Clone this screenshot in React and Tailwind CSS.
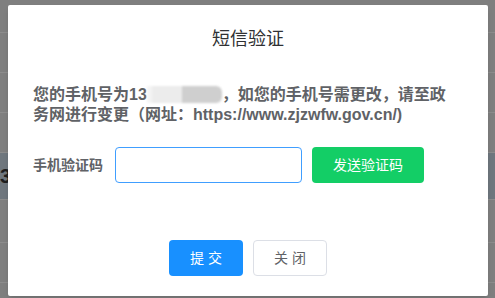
import React, { useState } from "react";

const rows = [
  { h: "h-[33px]", cls: "bg-[#7f7f7f]" },
  { h: "h-[40px]", cls: "bg-[#7f7f7f]" },
  { h: "h-[40px]", cls: "bg-[#7f7f7f]" },
  { h: "h-[40px]", cls: "bg-[#7f7f7f]" },
  { h: "h-[47px]", cls: "bg-[#6f777e]", text: "3" },
  { h: "h-[43px]", cls: "bg-[#7f7f7f]" },
  { h: "h-[40px]", cls: "bg-[#7f7f7f]" },
  { h: "h-[40px]", cls: "bg-[#7f7f7f]" },
];

const SmsDialog = () => {
  const [code, setCode] = useState("");

  return (
    <div className="absolute left-[8px] top-[5px] w-[480px] h-[291px] bg-white rounded-[2px] shadow-md flex flex-col">
      <div className="pt-[22px] text-center text-[18px] leading-[24px] text-[#303133]">
        短信验证
      </div>

      <div className="px-[25px] pt-[34px]">
        <p className="w-[420px] text-[16px] leading-[20px] font-bold text-[#606266]">
          您的手机号为13
          <span className="inline-flex align-middle h-[17px] -mt-[3px] blur-[1px]">
            <span className="w-[5px] bg-[#f4f4f4]" />
            <span className="w-[30px] bg-[#ececec]" />
            <span className="w-[40px] bg-[#cfcfcf] rounded-r-[6px]" />
          </span>
          ，如您的手机号需更改，请至政务网进行变更（网址：https://www.zjzwfw.gov.cn/)
        </p>

        <div className="flex items-center mt-[22px]">
          <label className="w-[82px] text-[14px] font-bold text-[#606266]">
            手机验证码
          </label>
          <input
            type="text"
            value={code}
            onChange={(e) => setCode(e.target.value)}
            className="w-[187px] h-[36px] px-[12px] border border-[#409eff] rounded-[4px] outline-none text-[14px]"
          />
          <button className="ml-[10px] w-[112px] h-[36px] bg-[#13ce66] text-white text-[14px] rounded-[4px]">
            发送验证码
          </button>
        </div>
      </div>

      <div className="mt-auto mb-[20px] flex justify-center gap-[10px]">
        <button className="w-[74px] h-[36px] bg-[#1890ff] text-white text-[14px] tracking-[4px] pl-[4px] rounded-[4px]">
          提交
        </button>
        <button className="w-[74px] h-[36px] bg-white border border-[#dcdfe6] text-[#606266] text-[14px] tracking-[4px] pl-[4px] rounded-[4px]">
          关闭
        </button>
      </div>
    </div>
  );
};

export default function App() {
  return (
    <div
      className="relative w-[495px] h-[298px] overflow-hidden bg-[#7f7f7f]"
      style={{ fontFamily: '"Liberation Sans", "Noto Sans CJK SC", sans-serif' }}
    >
      <div className="flex flex-col">
        {rows.map((r, i) => (
          <div
            key={i}
            className={`${r.h} ${r.cls} border-b border-[#8c8c8c] flex items-center text-[20px] font-bold text-[#1e1e1e]`}
          >
            {r.text}
          </div>
        ))}
      </div>
      <SmsDialog />
    </div>
  );
}
